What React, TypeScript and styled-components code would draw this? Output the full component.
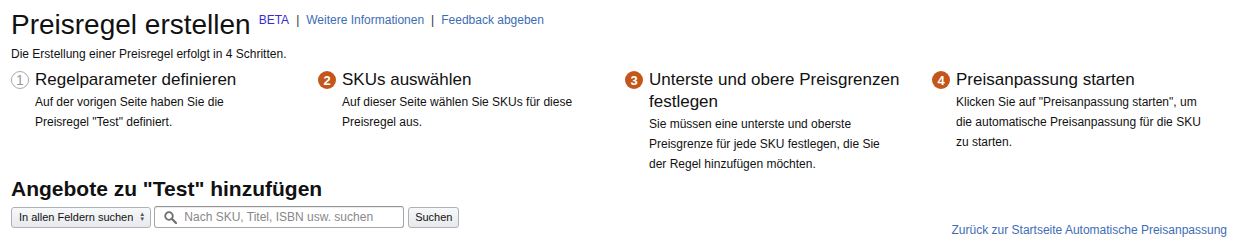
import React from 'react';
import styled, { createGlobalStyle } from 'styled-components';

const GlobalStyle = createGlobalStyle`
  html, body {
    margin: 0;
    padding: 0;
    background: #fff;
  }
  body {
    font-family: "Liberation Sans", Arial, sans-serif;
    color: #111;
  }
`;

const Page = styled.div`
  padding: 8px 10px 0 11px;
`;

const Header = styled.div`
  display: flex;
  align-items: flex-start;
`;

const Title = styled.h1`
  margin: 0;
  font-size: 28px;
  font-weight: 400;
  line-height: 34px;
  color: #111;
`;

const HeaderLinks = styled.div`
  display: flex;
  align-items: center;
  gap: 7px;
  margin-left: 8px;
  padding-top: 5px;
  font-size: 12px;
  line-height: 14px;
`;

const Link = styled.a<{ $beta?: boolean }>`
  color: ${(p) => (p.$beta ? '#3a2ccf' : '#3d6db5')};
  text-decoration: none;
  cursor: pointer;
`;

const Sep = styled.span`
  color: #333;
`;

const Intro = styled.p`
  margin: 5px 0 0;
  font-size: 12px;
  line-height: 15px;
  color: #111;
`;

const Steps = styled.div`
  display: grid;
  grid-template-columns: repeat(4, 307px);
  margin-top: 7px;
`;

const Step = styled.div`
  display: grid;
  grid-template-columns: 18px 1fr;
  align-content: start;
  column-gap: 6px;
  padding-right: 18px;
`;

const Badge = styled.span<{ $done?: boolean }>`
  display: flex;
  align-items: center;
  justify-content: center;
  width: 18px;
  height: 18px;
  margin-top: 2px;
  border-radius: 50%;
  box-sizing: border-box;
  font-size: ${(p) => (p.$done ? '14px' : '13px')};
  font-weight: ${(p) => (p.$done ? 400 : 700)};
  background: ${(p) => (p.$done ? '#fff' : '#c4561a')};
  color: ${(p) => (p.$done ? '#999' : '#fff')};
  border: ${(p) => (p.$done ? '1.5px solid #aaa' : 'none')};
`;

const StepTitle = styled.div`
  font-size: 17px;
  line-height: 22px;
  color: #111;
`;

const StepText = styled.div`
  grid-column: 2;
  margin-top: 1px;
  font-size: 12px;
  line-height: 20px;
  color: #111;
`;

const Heading = styled.h2`
  margin: 3px 0 0;
  font-size: 21px;
  font-weight: 700;
  line-height: 24px;
  color: #111;
`;

const Bar = styled.div`
  display: flex;
  justify-content: space-between;
  align-items: flex-start;
  margin-top: 5px;
`;

const Tools = styled.div`
  display: flex;
  align-items: center;
  gap: 3px;
`;

const Select = styled.div`
  display: flex;
  align-items: center;
  gap: 6px;
  height: 21px;
  box-sizing: border-box;
  padding: 0 5px 0 7px;
  border: 1px solid #adb1b8;
  border-radius: 3px;
  background: linear-gradient(#f7f8fa, #e7e9ec);
  font-size: 11px;
  color: #111;
`;

const Arrows = styled.span`
  display: flex;
  flex-direction: column;
  font-size: 6px;
  line-height: 5px;
  color: #555;
`;

const SearchBox = styled.div`
  display: flex;
  align-items: center;
  gap: 7px;
  width: 250px;
  height: 22px;
  box-sizing: border-box;
  padding: 0 8px 0 9px;
  border: 1px solid #a6a6a6;
  border-top-color: #949494;
  border-radius: 3px;
  background: #fff;
  box-shadow: inset 0 1px 0 rgba(0, 0, 0, 0.07);
`;

const Placeholder = styled.span`
  font-size: 12px;
  color: #888;
`;

const Button = styled.button`
  height: 21px;
  width: 51px;
  margin-left: 1px;
  padding: 0;
  border: 1px solid #adb1b8;
  border-radius: 3px;
  background: linear-gradient(#f7f8fa, #e7e9ec);
  font-family: inherit;
  font-size: 11px;
  color: #111;
`;

const BackLink = styled(Link)`
  margin-top: 17px;
  margin-right: 1px;
  font-size: 12px;
  color: #3d6db5;
`;

const steps = [
  {
    n: 1,
    done: true,
    title: 'Regelparameter definieren',
    lines: ['Auf der vorigen Seite haben Sie die', 'Preisregel "Test" definiert.'],
  },
  {
    n: 2,
    title: 'SKUs auswählen',
    lines: ['Auf dieser Seite wählen Sie SKUs für diese', 'Preisregel aus.'],
  },
  {
    n: 3,
    title: 'Unterste und obere Preisgrenzen festlegen',
    lines: [
      'Sie müssen eine unterste und oberste',
      'Preisgrenze für jede SKU festlegen, die Sie',
      'der Regel hinzufügen möchten.',
    ],
  },
  {
    n: 4,
    title: 'Preisanpassung starten',
    lines: [
      'Klicken Sie auf "Preisanpassung starten", um',
      'die automatische Preisanpassung für die SKU',
      'zu starten.',
    ],
  },
];

function App() {
  return (
    <Page>
      <GlobalStyle />
      <Header>
        <Title>Preisregel erstellen</Title>
        <HeaderLinks>
          <Link $beta>BETA</Link>
          <Sep>|</Sep>
          <Link>Weitere Informationen</Link>
          <Sep>|</Sep>
          <Link>Feedback abgeben</Link>
        </HeaderLinks>
      </Header>
      <Intro>Die Erstellung einer Preisregel erfolgt in 4 Schritten.</Intro>

      <Steps>
        {steps.map((s) => (
          <Step key={s.n}>
            <Badge $done={s.done}>{s.n}</Badge>
            <StepTitle>{s.title}</StepTitle>
            <StepText>
              {s.lines.map((l, i) => (
                <div key={i}>{l}</div>
              ))}
            </StepText>
          </Step>
        ))}
      </Steps>

      <Heading>Angebote zu "Test" hinzufügen</Heading>
      <Bar>
        <Tools>
          <Select>
            In allen Feldern suchen
            <Arrows>
              <span>▲</span>
              <span>▼</span>
            </Arrows>
          </Select>
          <SearchBox>
            <svg width="13" height="13" viewBox="0 0 13 13">
              <circle cx="5" cy="5" r="3.8" fill="none" stroke="#6f6f6f" strokeWidth="1.8" />
              <line x1="7.8" y1="7.8" x2="12" y2="12" stroke="#6f6f6f" strokeWidth="2.2" strokeLinecap="round" />
            </svg>
            <Placeholder>Nach SKU, Titel, ISBN usw. suchen</Placeholder>
          </SearchBox>
          <Button>Suchen</Button>
        </Tools>
        <BackLink>Zurück zur Startseite Automatische Preisanpassung</BackLink>
      </Bar>
    </Page>
  );
}

export default App;
